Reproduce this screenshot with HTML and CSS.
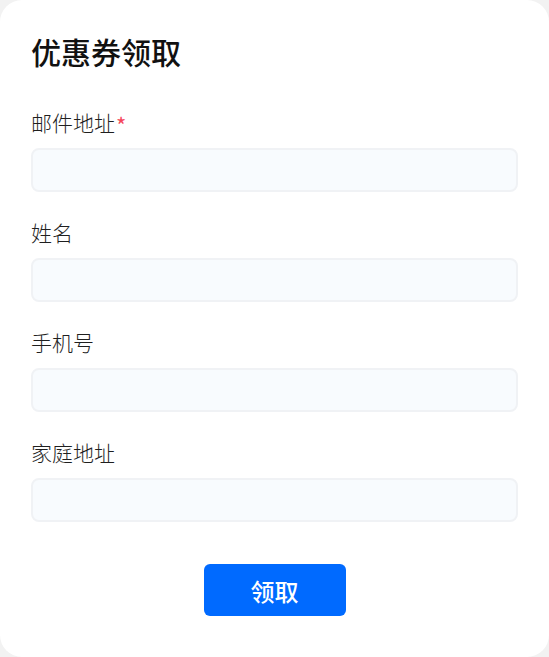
FILE: index.html
```html
<!DOCTYPE html>
<html lang="zh-CN">
<head>
    <meta charset="UTF-8">
    <title>优惠券领取</title>
    <link rel="stylesheet" href="styles.css">
</head>
<body>
    <div class="card">
        <h1>优惠券领取</h1>

        <form class="coupon-form">
            <div class="field">
                <label for="email">邮件地址<span class="required">*</span></label>
                <input type="email" id="email">
            </div>
            <div class="field">
                <label for="name">姓名</label>
                <input type="text" id="name">
            </div>
            <div class="field">
                <label for="phone">手机号</label>
                <input type="tel" id="phone">
            </div>
            <div class="field">
                <label for="address">家庭地址</label>
                <input type="text" id="address">
            </div>
            <div class="actions">
                <button type="button">领取</button>
            </div>
        </form>
    </div>
</body>
</html>
```

FILE: styles.css
```css
html, body {
    margin: 0;
    height: 100%;
}
body {
    background: #f2f2f2;
    font-family: "Noto Sans CJK SC", "Noto Sans", sans-serif;
}
.card {
    box-sizing: border-box;
    height: 657px;
    background: #fff;
    border-radius: 22px;
    padding: 31px 31px 41px;
}
h1 {
    margin: 0;
    font-size: 30px;
    line-height: 40px;
    font-weight: 500;
    color: #111;
}
.coupon-form {
    margin-top: 37px;
}
.field {
    display: flex;
    flex-direction: column;
    gap: 12px;
    margin-bottom: 26px;
}
.field label {
    height: 28px;
    font-size: 21px;
    line-height: 28px;
    font-weight: 300;
    color: #1f1f1f;
}
.required {
    color: #f5475b;
    font-weight: 400;
    font-size: 22px;
    line-height: 0;
    margin-left: 1px;
    vertical-align: -3px;
}
.field input {
    box-sizing: border-box;
    height: 44px;
    width: 100%;
    background: #f8fbfe;
    border: 2px solid #f0f2f5;
    border-radius: 8px;
    outline: none;
    font-size: 16px;
    padding: 0 12px;
}
.actions {
    display: flex;
    justify-content: center;
    padding-top: 16px;
}
button {
    width: 142px;
    height: 52px;
    border: none;
    border-radius: 6px;
    background: #006aff;
    color: #fff;
    font-family: inherit;
    font-size: 24px;
    font-weight: 500;
    cursor: pointer;
}
```
